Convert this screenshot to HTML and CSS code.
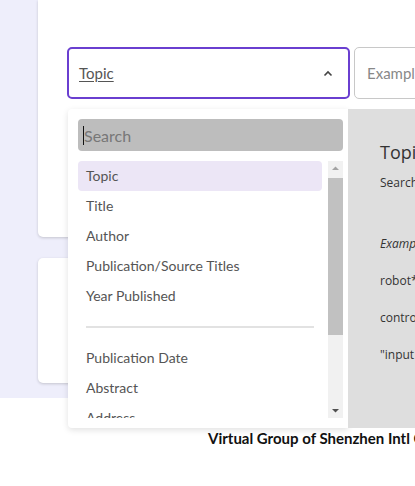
FILE: index.html
```html
<!DOCTYPE html>
<html>
<head>
<meta charset="utf-8">
<link rel="stylesheet" href="styles.css">
</head>
<body>
<div class="page">
  <div class="bg">
    <div class="card card-top">
      <div class="row">
        <div class="select">
          <span class="select-value">Topic</span>
          <svg class="chev" width="10" height="7" viewBox="0 0 10 7"><path d="M1.5 5.5 L5 2 L8.5 5.5" fill="none" stroke="#444" stroke-width="1.6"/></svg>
        </div>
        <div class="query">Exampl</div>
      </div>
    </div>
    <div class="card card-bottom"></div>
  </div>
  <div class="footer">Virtual Group of Shenzhen Intl C</div>

  <div class="overlay">
    <div class="menu">
      <div class="search"><span class="caret"></span><span class="ph">Search</span></div>
      <div class="listwrap">
        <div class="list">
          <div class="item active">Topic</div>
          <div class="item">Title</div>
          <div class="item">Author</div>
          <div class="item">Publication/Source Titles</div>
          <div class="item">Year Published</div>
          <div class="divider"></div>
          <div class="item">Publication Date</div>
          <div class="item">Abstract</div>
          <div class="item">Address</div>
        </div>
        <div class="scrollbar">
          <svg class="arr" width="15" height="15" viewBox="0 0 15 15"><path d="M4 9 L7.5 5.5 L11 9 Z" fill="#a3a3a3"/></svg>
          <div class="thumb"></div>
          <div class="spacer"></div>
          <svg class="arr" width="15" height="15" viewBox="0 0 15 15"><path d="M4 6 L7.5 9.5 L11 6 Z" fill="#505050"/></svg>
        </div>
      </div>
    </div>
    <div class="help">
      <div class="help-title">Topic</div>
      <div class="help-line first">Search</div>
      <div class="help-line blank">&nbsp;</div>
      <div class="help-line"><em>Example</em></div>
      <div class="help-line">robot*</div>
      <div class="help-line">control</div>
      <div class="help-line">"input</div>
    </div>
  </div>
</div>
</body>
</html>
```
FILE: styles.css
```css
html, body {
  margin: 0;
  padding: 0;
  background: #ffffff;
  overflow: hidden;
}
body {
  width: 415px;
  height: 486px;
  font-family: "Lato", "Noto Sans", sans-serif;
}
.page {
  position: relative;
  width: 415px;
  height: 486px;
  overflow: hidden;
}
.bg {
  background: #eeeefb;
  height: 398px;
  padding-left: 38px;
  display: flex;
  flex-direction: column;
  gap: 21px;
  box-sizing: border-box;
}
.card {
  background: #fff;
  width: 520px;
  border-radius: 0 0 0 5px;
  box-shadow: 0 1px 3px rgba(0,0,0,0.18);
  box-sizing: border-box;
}
.card-top {
  height: 237px;
  padding: 47px 0 0 29px;
}
.card-bottom {
  height: 125px;
  border-radius: 5px 0 0 5px;
}
.row {
  display: flex;
  gap: 4px;
}
.select {
  width: 283px;
  height: 52px;
  box-sizing: border-box;
  border: 2px solid #6a3fd0;
  border-radius: 5px;
  display: flex;
  align-items: center;
  justify-content: space-between;
  padding: 0 15px 0 10px;
}
.select-value {
  font-size: 15px;
  color: #555;
  text-decoration: underline;
  text-underline-offset: 2px;
}
.query {
  width: 120px;
  height: 52px;
  box-sizing: border-box;
  border: 1px solid #c8c8c8;
  border-radius: 5px;
  display: flex;
  align-items: center;
  padding-left: 12px;
  font-size: 15px;
  color: #888;
}
.footer {
  padding: 31px 0 0 208px;
  font-size: 15px;
  font-weight: 700;
  color: #111;
  white-space: nowrap;
}
.overlay {
  position: absolute;
  left: 68px;
  top: 109px;
  height: 319px;
  display: flex;
}
.menu {
  width: 280px;
  height: 319px;
  background: #fff;
  box-sizing: border-box;
  padding: 10px 5px 0 10px;
  box-shadow: 0 2px 6px rgba(0,0,0,0.12);
  border-radius: 4px 0 0 4px;
  display: flex;
  flex-direction: column;
  gap: 10px;
}
.search {
  height: 32px;
  background: #bdbdbd;
  border-radius: 4px;
  display: flex;
  align-items: center;
  padding-left: 5px;
  flex: none;
}
.caret {
  width: 1px;
  height: 19px;
  background: #111;
}
.ph {
  font-size: 16px;
  color: #777;
}
.listwrap {
  display: flex;
  gap: 6px;
  height: 257px;
  overflow: hidden;
}
.list {
  width: 244px;
  flex: none;
}
.item {
  height: 30px;
  line-height: 30px;
  padding-left: 8px;
  font-size: 14px;
  color: #555;
  border-radius: 4px;
  white-space: nowrap;
}
.item.active {
  background: #ece6f6;
}
.divider {
  height: 2px;
  background: #e2e2e2;
  margin: 15px 8px;
}
.scrollbar {
  width: 15px;
  background: #f1f1f1;
  display: flex;
  flex-direction: column;
  flex: none;
}
.arr {
  display: block;
  flex: none;
}
.thumb {
  height: 157px;
  background: #c1c1c1;
  margin: 2px 0 0;
}
.spacer {
  flex: 1;
}
.help {
  width: 200px;
  height: 319px;
  background: #dedede;
  box-sizing: border-box;
  padding: 29px 0 0 32px;
  font-family: "Open Sans", "Noto Sans", sans-serif;
  color: #333;
}
.help-title {
  font-size: 18px;
  line-height: 28px;
  margin-bottom: 8px;
}
.help-line {
  font-size: 12px;
  line-height: 37px;
  height: 37px;
}
.help-line.first {
  line-height: 18px;
  height: 18px;
}
.help-line.blank {
  height: 33px;
}
```
